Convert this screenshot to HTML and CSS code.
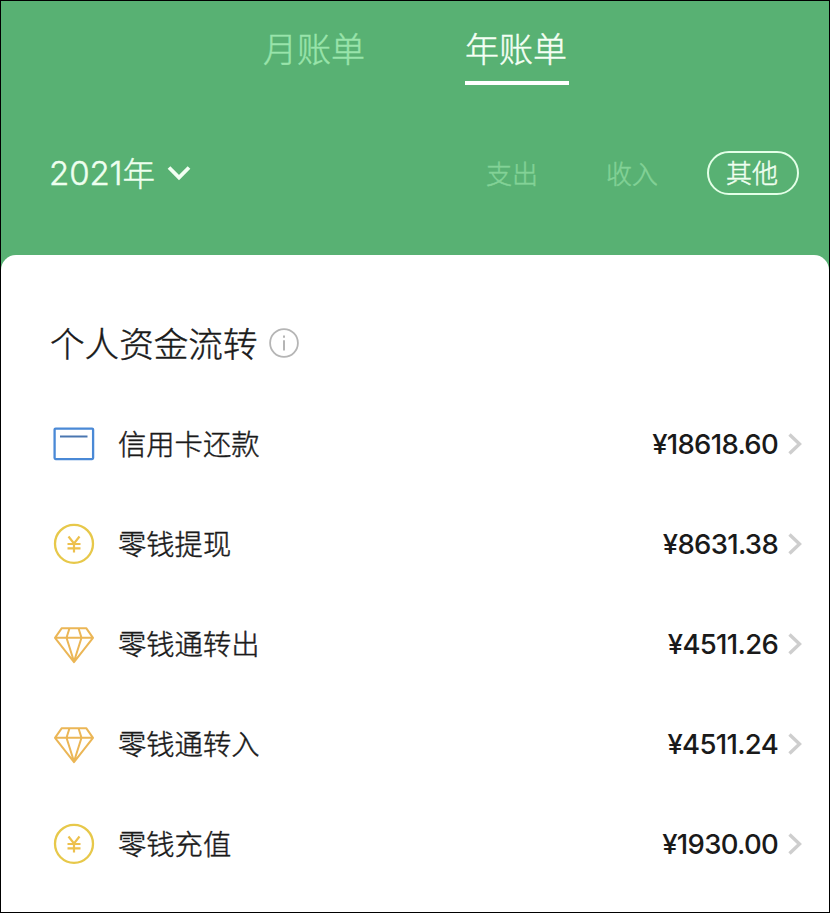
FILE: index.html
```html
<!DOCTYPE html>
<html lang="zh-CN">
<head>
<meta charset="utf-8">
<title>年账单</title>
<link rel="stylesheet" href="styles.css">
</head>
<body>
<svg class="defs" width="0" height="0">
  <symbol id="card" viewBox="0 0 42 42"><rect x="1.6" y="5.6" width="38.5" height="30.5" rx="1" stroke="#4a89d6" stroke-width="2.3"/><path d="M7 13.5H34.5" stroke="#4a76b0" stroke-width="2"/></symbol>
  <symbol id="coin" viewBox="0 0 42 42"><circle cx="21" cy="20.8" r="19" stroke="#e7c84a" stroke-width="2.3"/><path d="M15.5 13.5L21 20.5L26.5 13.5M21 20.5V29.5M14.5 21H27.5M14.5 25.3H27.5" stroke="#edc04d" stroke-width="2.2"/></symbol>
  <symbol id="gem" viewBox="0 0 42 42"><path d="M8.8 5.2H33.2L40 14.8L21 39.2L2 14.8ZM2 14.8H40M16.5 5.2L13.5 14.8L21 38.5L28.5 14.8L25.5 5.2" stroke="#ebb656" stroke-width="2" stroke-linejoin="round"/></symbol>
  <symbol id="arrow" viewBox="0 0 14 22"><path d="M1.5 1.5L11.5 11L1.5 20.5" stroke="#cecece" stroke-width="3.4"/></symbol>
</svg>
<div class="page">
  <header class="header">
    <nav class="tabs">
      <span class="tab">月账单</span>
      <span class="tab tab-active">年账单</span>
    </nav>
    <div class="filters">
      <div class="year"><span class="digits">2021</span><span class="unit">年</span>
        <svg class="chevron" width="24" height="16" viewBox="0 0 24 16" fill="none"><path d="M2 2.5L12 12.5L22 2.5" stroke="#f2fff3" stroke-width="3.8"/></svg>
      </div>
      <div class="kinds">
        <span class="kind">支出</span>
        <span class="kind">收入</span>
        <span class="kind kind-active">其他</span>
      </div>
    </div>
  </header>
  <main class="sheet">
    <h1 class="title"><span class="title-text">个人资金流转</span>
      <svg width="30" height="30" viewBox="0 0 30 30" fill="none" stroke="#b5b5b5"><circle cx="15" cy="15" r="13.9" stroke-width="1.8"/><path d="M15 12.2V22.5M15 7.5V9.8" stroke-width="2"/></svg>
    </h1>
    <ul class="list">
      <li class="row"><svg class="icon"><use href="#card"/></svg><span class="label">信用卡还款</span><span class="amount">¥18618.60</span><svg class="arrow"><use href="#arrow"/></svg></li>
      <li class="row"><svg class="icon"><use href="#coin"/></svg><span class="label">零钱提现</span><span class="amount">¥8631.38</span><svg class="arrow"><use href="#arrow"/></svg></li>
      <li class="row"><svg class="icon"><use href="#gem"/></svg><span class="label">零钱通转出</span><span class="amount">¥4511.26</span><svg class="arrow"><use href="#arrow"/></svg></li>
      <li class="row"><svg class="icon"><use href="#gem"/></svg><span class="label">零钱通转入</span><span class="amount">¥4511.24</span><svg class="arrow"><use href="#arrow"/></svg></li>
      <li class="row"><svg class="icon"><use href="#coin"/></svg><span class="label">零钱充值</span><span class="amount">¥1930.00</span><svg class="arrow"><use href="#arrow"/></svg></li>
    </ul>
  </main>
</div>
</body>
</html>
```
FILE: styles.css
```css
* { box-sizing: border-box; margin: 0; padding: 0; }
body { font-family: "Noto Sans CJK SC", sans-serif; font-weight: 300; color: #1a1a1a; -webkit-text-stroke: 0.45px currentColor; }
.defs { position: absolute; }
.page { height: 913px; border: 1px solid #000; background: #58b173; display: flex; flex-direction: column; overflow: hidden; }
.header { height: 254px; flex: none; }
.tabs { display: flex; gap: 98px; padding: 22px 0 0 260px; }
.tab { width: 106px; height: 62px; padding-left: 2px; font-size: 34px; line-height: 50px; color: #99e4ab; white-space: nowrap; }
.tab-active { width: 104px; padding-left: 0; color: #f5fff5; border-bottom: 4px solid #fff; }
.filters { display: flex; justify-content: space-between; align-items: center; height: 46px; margin-top: 65px; padding: 0 30px 0 48px; }
.year { display: flex; align-items: center; font-size: 32.5px; line-height: 46px; color: #eeffef; }
.digits { font-family: Inter, sans-serif; font-size: 33px; letter-spacing: -0.1px; }
.unit { padding-bottom: 3px; }
.chevron { margin-left: 12px; }
.kinds { display: flex; align-items: center; }
.kind { font-size: 26px; line-height: 38px; margin-right: 68px; color: #83d297; }
.kind-active { width: 92px; height: 44px; margin: 0 0 0 -19px; padding-right: 2px; border: 2px solid #e3ffe7; border-radius: 22px; text-align: center; color: #f0fff0; }
.sheet { flex: 1; background: #fff; border-radius: 15px 15px 0 0; padding: 63px 27px 0 49px; }
.title { display: flex; align-items: center; gap: 12px; height: 50px; font-size: 34.6px; font-weight: 300; line-height: 50px; }
.title-text { padding-bottom: 3px; }
.list { list-style: none; margin-top: 26px; }
.row { display: flex; align-items: center; height: 100px; }
.icon { width: 42px; height: 42px; margin-left: 3px; fill: none; }
.label { margin-left: 23px; padding-bottom: 2px; font-size: 28.3px; line-height: 42px; }
.amount { margin-left: auto; font-family: Inter, sans-serif; font-size: 27.5px; font-weight: 500; letter-spacing: -0.7px; -webkit-text-stroke: 0; }
.arrow { width: 14px; height: 22px; margin-left: 10px; fill: none; }
```
